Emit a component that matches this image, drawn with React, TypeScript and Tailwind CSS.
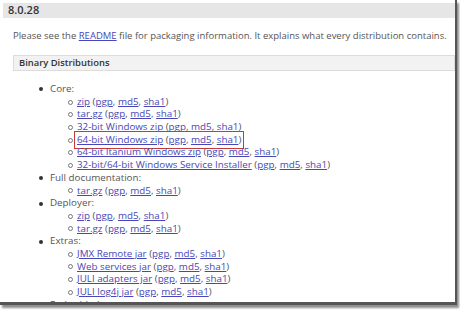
import React from 'react';

type Item = { label: string; boxed?: boolean };

const groups: { title: string; items: Item[] }[] = [
  {
    title: 'Core:',
    items: [
      { label: 'zip' },
      { label: 'tar.gz' },
      { label: '32-bit Windows zip' },
      { label: '64-bit Windows zip', boxed: true },
      { label: '64-bit Itanium Windows zip' },
      { label: '32-bit/64-bit Windows Service Installer' },
    ],
  },
  { title: 'Full documentation:', items: [{ label: 'tar.gz' }] },
  { title: 'Deployer:', items: [{ label: 'zip' }, { label: 'tar.gz' }] },
  {
    title: 'Extras:',
    items: [
      { label: 'JMX Remote jar' },
      { label: 'Web services jar' },
      { label: 'JULI adapters jar' },
      { label: 'JULI log4j jar' },
    ],
  },
  { title: 'Embedded:', items: [] },
];

function L({ children }: { children: React.ReactNode }) {
  return <a className="text-[#4747b8] underline underline-offset-1">{children}</a>;
}

function Row({ item }: { item: Item }) {
  return (
    <div className="flex items-center h-[12.7px]">
      <span className="w-[5px] h-[5px] rounded-full border border-[#777] ml-[68px] mr-[4px]" />
      <span
        className={`whitespace-nowrap ${item.boxed ? 'outline outline-[1.5px] outline-[#c63a3a] outline-offset-[1px] -ml-[1px] pl-[1px] pr-[1px]' : ''}`}
      >
        <L>{item.label}</L> (<L>pgp</L>, <L>md5</L>, <L>sha1</L>)
      </span>
    </div>
  );
}

export default function App() {
  return (
    <div className="w-[460px] h-[310px] bg-white">
      <div
        className="w-[457px] h-[305px] bg-white overflow-hidden border-r-2 border-b-[3px] border-[#555] shadow-[2px_3px_2px_rgba(0,0,0,0.45)] text-[#555] text-[9.8px]"
        style={{ fontFamily: '"Open Sans", "Noto Sans", sans-serif' }}
      >
        {/* version header */}
        <div className="mt-[3px] ml-[3px] h-[15px] bg-[#e6e6e6] flex items-center pl-[5px] text-[11px] font-semibold text-[#333]">
          8.0.28
        </div>

        <p className="mt-[11px] ml-[13px] leading-[14px] whitespace-nowrap text-[9.5px]">
          Please see the <L>README</L> file for packaging information. It explains what every distribution contains.
        </p>

        {/* binary distributions */}
        <div className="mt-[12px] ml-[13px] h-[16px] bg-[#f2f2f2] border border-[#dcdcdc] flex items-center pl-[5px] font-semibold text-[#333] text-[9.4px]">
          Binary Distributions
        </div>

        <div className="mt-[12px]">
          {groups.map((g) => (
            <div key={g.title}>
              <div className="flex items-center h-[12.7px]">
                <span className="w-[4px] h-[4px] rounded-full bg-[#333] ml-[39px] mr-[7px]" />
                <span>{g.title}</span>
              </div>
              {g.items.map((it, i) => (
                <Row key={i} item={it} />
              ))}
            </div>
          ))}
        </div>
      </div>
    </div>
  );
}
